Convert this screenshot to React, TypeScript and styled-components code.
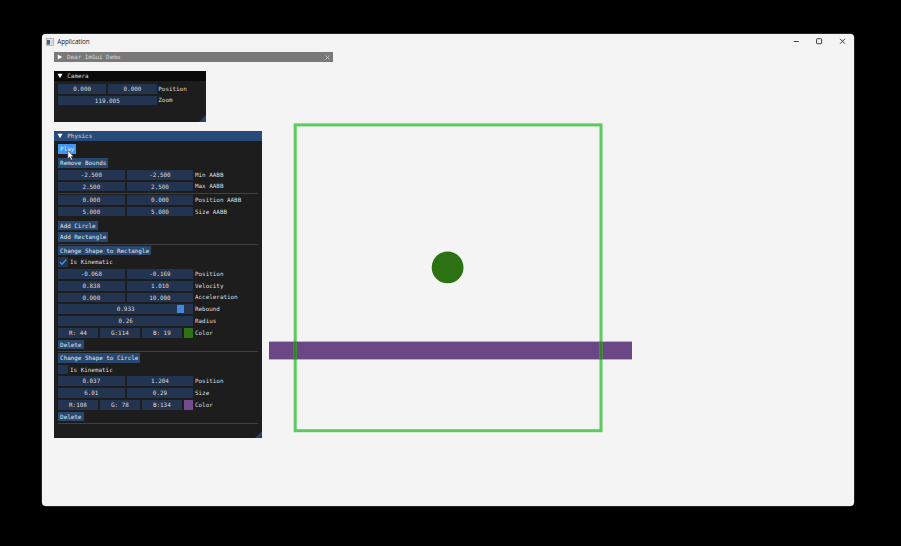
import React from "react";
import styled, { createGlobalStyle } from "styled-components";

const GlobalStyle = createGlobalStyle`
  html, body { margin: 0; background: #000; }
  * { box-sizing: border-box; }
`;

const Desktop = styled.div`
  width: 901px;
  height: 546px;
  padding: 34px 47px 40px 42px;
  background: #000;
  overflow: hidden;
`;

const AppWindow = styled.main`
  position: relative;
  display: flex;
  flex-direction: column;
  width: 812px;
  height: 472px;
  border-radius: 4px;
  background: #f4f4f4;
  box-shadow: 0 0 0 0.5px #4a4a4a;
  overflow: hidden;
`;

const TitleBar = styled.header`
  display: flex;
  align-items: center;
  height: 15px;
  padding: 0 4px;
  background: #f3f3f3;
  color: #1c1c1c;
  font: 6.2px/15px "Open Sans", "Noto Sans", sans-serif;
  letter-spacing: -0.15px;
  font-size: 6.3px;
`;

const AppName = styled.span`
  flex: 1;
  margin-left: 3.3px;
  letter-spacing: -0.05px;
`;

const Controls = styled.svg`
  width: 60px;
  height: 15px;
`;

const Scene = styled.svg`
  width: 812px;
  height: 457px;
`;

const Panel = styled.section<{ $x: number; $y: number; $w: number; $h: number }>`
  position: absolute;
  left: ${(p) => p.$x}px;
  top: ${(p) => p.$y}px;
  width: ${(p) => p.$w}px;
  height: ${(p) => p.$h}px;
  background: #1d1d1d;
  color: #dcdcdc;
  font: 5.92px/10px "DejaVu Sans Mono", monospace;
  white-space: pre;
`;

const PanelTitle = styled.div<{ $bg: string; $fg?: string }>`
  display: flex;
  align-items: center;
  height: 10px;
  padding: 0 3px 0 2.5px;
  background: ${(p) => p.$bg};
  color: ${(p) => p.$fg ?? "#dcdcdc"};
`;

const Arrow = styled.svg`
  width: 6px;
  height: 6px;
  margin-right: 4.5px;
  fill: #fff;
`;

const TitleText = styled.span`
  flex: 1;
`;

const CloseMark = styled.svg`
  width: 5px;
  height: 5px;
  stroke: #b9bec6;
`;

const Body = styled.div`
  display: flex;
  flex-direction: column;
  gap: 2px;
  padding: 3.3px 4px 3.3px 3.7px;
`;

const Row = styled.div<{ $extra?: number }>`
  display: flex;
  align-items: center;
  gap: 2px;
  height: 9.75px;
  margin-top: ${(p) => p.$extra ?? 0}px;
`;

const Fields = styled.div<{ $w: number }>`
  display: flex;
  gap: 2px;
  width: ${(p) => p.$w}px;
  height: 9.75px;
`;

const Field = styled.div`
  position: relative;
  flex: 1 1 0;
  height: 9.75px;
  background: #233451;
  text-align: center;
`;

const Grab = styled.span`
  position: absolute;
  top: 1px;
  right: 9.5px;
  width: 6.5px;
  height: 8px;
  background: #4387dc;
`;

const Swatch = styled.div<{ $color: string }>`
  width: 9.5px;
  height: 9.75px;
  background: ${(p) => p.$color};
`;

const Label = styled.span`
  margin-left: -0.3px;
`;

const Button = styled.button<{ $hot?: boolean }>`
  height: 9.75px;
  padding: 0 2.1px;
  border: 0;
  background: ${(p) => (p.$hot ? "#4296f2" : "#284870")};
  color: ${(p) => (p.$hot ? "#d2e9ff" : "#e0e3e8")};
  font: inherit;
  text-align: left;
`;

const Divider = styled.hr`
  flex: none;
  width: 100%;
  height: 1px;
  margin: 0 0 -1.4px;
  border: 0;
  background: #404044;
`;

const Check = styled.span`
  display: flex;
  align-items: center;
  justify-content: center;
  width: 9.75px;
  height: 9.75px;
  margin-right: 0.6px;
  background: #233451;
`;

const Grip = styled.svg`
  position: absolute;
  right: 0;
  bottom: 0;
  width: 7px;
  height: 7px;
  fill: #25446d;
`;

const Cursor = styled.svg`
  position: absolute;
  left: 25px;
  top: 116px;
  width: 8px;
  height: 11px;
`;

const DownArrow = () => (
  <Arrow viewBox="0 0 6 6"><path d="M.5 .8h5L3 5.3z" /></Arrow>
);

type ValueProps = { values: string[]; label: string; width?: number; swatch?: string; grab?: boolean; extra?: number };

const ValueRow = ({ values, label, width = 135.3, swatch, grab, extra }: ValueProps) => (
  <Row $extra={extra}>
    <Fields $w={width}>
      {values.map((v, i) => (
        <Field key={i}>
          {grab && <Grab />}
          {v}
        </Field>
      ))}
      {swatch && <Swatch $color={swatch} />}
    </Fields>
    <Label>{label}</Label>
  </Row>
);

const Action = ({ text, hot, extra }: { text: string; hot?: boolean; extra?: number }) => (
  <Row $extra={extra}><Button $hot={hot}>{text}</Button></Row>
);

const Kinematic = ({ checked }: { checked?: boolean }) => (
  <Row>
    <Check>
      {checked && (
        <svg width="8" height="8" viewBox="0 0 8 8" fill="none" stroke="#4794f0" strokeWidth="1.4">
          <path d="M1 4.2l2 2L7.2 1.6" />
        </svg>
      )}
    </Check>
    <Label>Is Kinematic</Label>
  </Row>
);

const ResizeGrip = () => (
  <Grip viewBox="0 0 7 7"><path d="M7 0v7H0z" /></Grip>
);

export default function App() {
  return (
    <Desktop>
      <GlobalStyle />
      <AppWindow>
        <TitleBar>
          <svg width="8" height="8" viewBox="0 0 8 8">
            <rect x=".4" y=".4" width="7.2" height="7" fill="#e4e7e9" stroke="#8d9398" strokeWidth=".6" />
            <rect x="1" y="2" width="3" height="4.6" fill="#48647a" />
            <rect x="5" y="2" width="1.6" height="4.6" fill="#d3d7da" />
          </svg>
          <AppName>Application</AppName>
          <Controls viewBox="0 0 60 15" fill="none" stroke="#2a2a2a" strokeWidth=".9">
            <path d="M3.8 7.5h5M50 4.8l5 5M55 4.8l-5 5" />
            <rect x="26.6" y="4.7" width="5" height="5" rx=".7" />
          </Controls>
        </TitleBar>

        <Scene viewBox="42 49 812 457">
          <rect x="269" y="341.6" width="363" height="17.8" fill="#6c4786" />
          <rect x="295.2" y="124.9" width="305.8" height="305.8" fill="none" stroke="#5bcb5e" strokeWidth="3" />
          <path d="M295.2 341.6v17.8M601 341.6v17.8" stroke="#37802f" strokeWidth="3" />
          <circle cx="447.6" cy="267.4" r="15.9" fill="#2c7213" />
        </Scene>

        <Panel $x={12} $y={18} $w={279} $h={10}>
          <PanelTitle $bg="#797979" $fg="#d6d6d6">
            <Arrow viewBox="0 0 6 6"><path d="M.8 .5v5L5.3 3z" /></Arrow>
            <TitleText>Dear ImGui Demo</TitleText>
            <CloseMark viewBox="0 0 5 5"><path d="M.5 .5l4 4M4.5 .5l-4 4" /></CloseMark>
          </PanelTitle>
        </Panel>

        <Panel $x={12.3} $y={36.5} $w={151.5} $h={51.5}>
          <PanelTitle $bg="#090909">
            <DownArrow />
            <TitleText>Camera</TitleText>
          </PanelTitle>
          <Body>
            <ValueRow values={["0.000", "0.000"]} label="Position" width={98.6} />
            <ValueRow values={["119.005"]} label="Zoom" width={98.6} />
          </Body>
          <ResizeGrip />
        </Panel>

        <Panel $x={12.3} $y={97} $w={207.9} $h={307.4}>
          <PanelTitle $bg="#284a79">
            <DownArrow />
            <TitleText>Physics</TitleText>
          </PanelTitle>
          <Body>
            <Action text="Play" hot />
            <Action text="Remove Bounds" extra={2} />
            <ValueRow values={["-2.500", "-2.500"]} label="Min AABB" />
            <ValueRow values={["2.500", "2.500"]} label="Max AABB" />
            <Divider />
            <ValueRow values={["0.000", "0.000"]} label="Position AABB" />
            <ValueRow values={["5.000", "5.000"]} label="Size AABB" />
            <Action text="Add Circle" extra={2.1} />
            <Action text="Add Rectangle" />
            <Divider />
            <Action text="Change Shape to Rectangle" />
            <Kinematic checked />
            <ValueRow values={["-0.068", "-0.169"]} label="Position" />
            <ValueRow values={["0.838", "1.010"]} label="Velocity" />
            <ValueRow values={["0.000", "10.000"]} label="Acceleration" />
            <ValueRow values={["0.933"]} label="Rebound" grab />
            <ValueRow values={["0.26"]} label="Radius" />
            <ValueRow values={["R: 44", "G:114", "B: 19"]} label="Color" swatch="#2c7213" />
            <Action text="Delete" />
            <Divider />
            <Action text="Change Shape to Circle" />
            <Kinematic />
            <ValueRow values={["0.037", "1.204"]} label="Position" />
            <ValueRow values={["6.01", "0.29"]} label="Size" />
            <ValueRow values={["R:108", "G: 78", "B:134"]} label="Color" swatch="#734b8f" />
            <Action text="Delete" />
            <Divider />
          </Body>
          <ResizeGrip />
        </Panel>

        <Cursor viewBox="0 0 8 11">
          <path d="M.8 .6v8.2l1.9-1.7 1.3 3 1.5-.7-1.3-2.8h2.5z" fill="#fff" stroke="#222" strokeWidth=".5" />
        </Cursor>
      </AppWindow>
    </Desktop>
  );
}
